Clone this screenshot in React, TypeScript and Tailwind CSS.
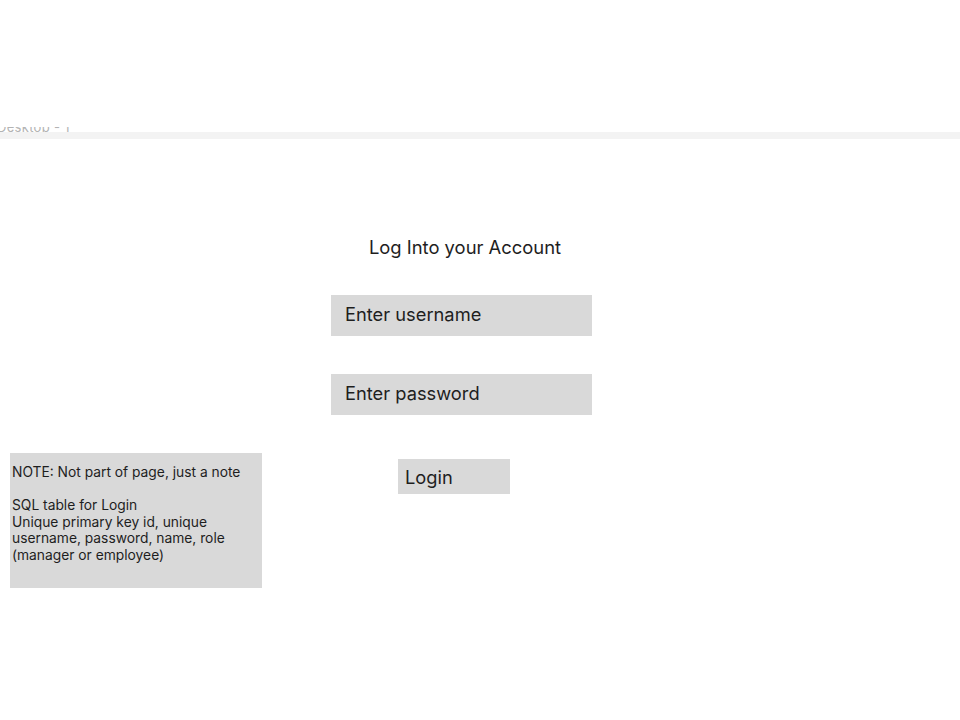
const App = () => {
	return (
		<div className="min-h-[720px] w-[960px] bg-white text-[#1e1e1e] font-['Inter',sans-serif]">
			<div className="flex h-[132px] flex-col justify-end">
				<div className="h-[5px] overflow-hidden">
					<p className="-mt-[7px] -ml-[3px] text-[13px] leading-[15px] tracking-[0.3px] text-[#b3b3b3]">
						Desktop - 1
					</p>
				</div>
			</div>
			<div className="h-[7px] bg-[#f3f3f3]"></div>

			<div className="pt-[96px]">
				<h1 className="ml-[331px] w-[261px] pl-[7px] text-center text-[18.4px] leading-[24px] font-normal">
					Log Into your Account
				</h1>

				<div className="mt-[36px] ml-[331px] flex h-[41px] w-[261px] items-start bg-[#d9d9d9] pt-[7px] pl-[14px] text-[18.3px] leading-[24px]">
					Enter username
				</div>

				<div className="mt-[38px] ml-[331px] flex h-[41px] w-[261px] items-start bg-[#d9d9d9] pt-[7px] pl-[14px] text-[18.3px] leading-[24px]">
					Enter password
				</div>

				<div className="mt-[38px] flex items-start">
					<div className="ml-[10px] h-[135px] w-[252px] whitespace-pre-line bg-[#d9d9d9] pt-[11px] pl-[2px] text-[13.8px] leading-[16.6px]">
						{"NOTE: Not part of page, just a note\n\nSQL table for Login\nUnique primary key id, unique\nusername, password, name, role\n(manager or employee)"}
					</div>
					<button className="mt-[6px] ml-[136px] flex h-[35px] w-[112px] items-start bg-[#d9d9d9] pt-[6px] pl-[7px] text-[18.3px] leading-[24px]">
						Login
					</button>
				</div>
			</div>
		</div>
	);
};

export default App;
